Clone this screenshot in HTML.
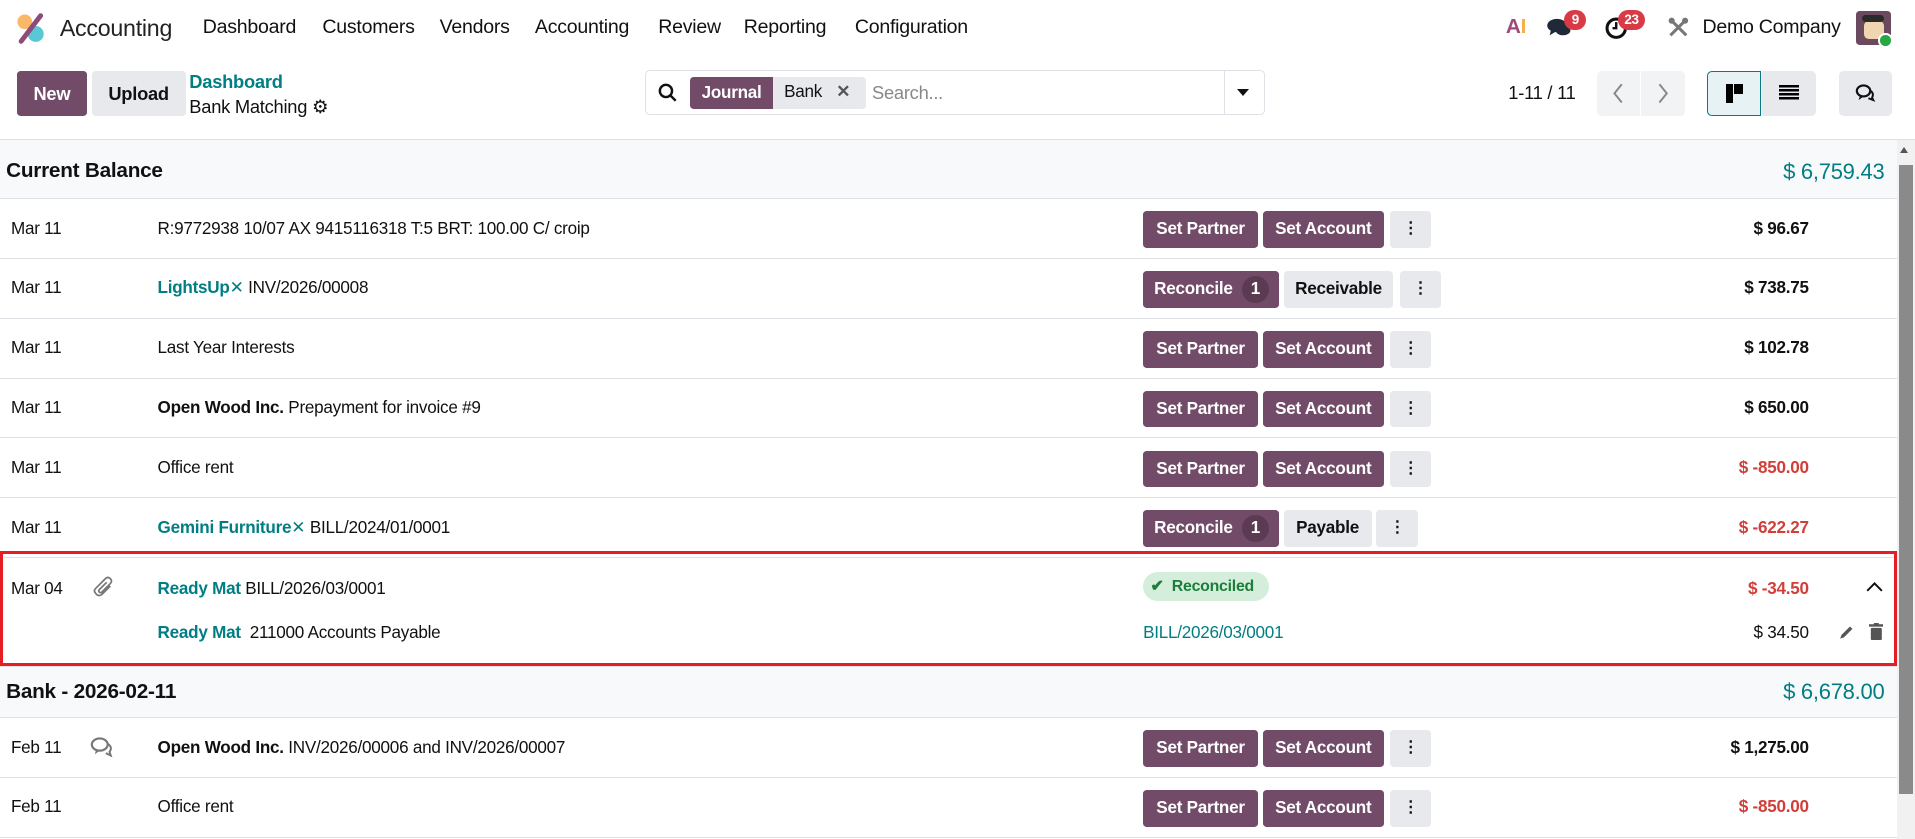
<!DOCTYPE html>
<html><head><meta charset="utf-8"><style>
html{zoom:1.2213}
*{box-sizing:border-box;margin:0;padding:0}
body{width:1568px;height:687px;overflow:hidden;background:#fff;font-family:"Liberation Sans",sans-serif;color:#111;position:relative;font-size:14px;letter-spacing:-0.2px}
.a{position:absolute;white-space:nowrap}
.nav{font-size:16px;top:13px}
.btn{position:absolute;height:30px;border-radius:3px;font-size:14px;font-weight:bold;line-height:30px;text-align:center;color:#fff;background:#714b67}
.g{background:#e7e9ed;color:#111}
.row{position:absolute;left:0;width:1553px;height:49px;border-bottom:1px solid #dee2e6;background:#fff}
.row .d{position:absolute;left:9px;top:16px}
.row .l{position:absolute;left:129px;top:16px}
.row .m{position:absolute;right:72px;top:16px;font-weight:bold}
.teal{color:#017e84}
.red{color:#d23f3a}
.grp{position:absolute;left:0;width:1553px;background:#f8f9fa;border-bottom:1px solid #dee2e6}
.kb{font-size:13px}
</style></head><body>
<svg class="a" style="left:12px;top:10px" width="26" height="26" viewBox="0 0 26 26"><circle cx="8" cy="8" r="6" fill="#f9b869"/><circle cx="17" cy="18" r="6.5" fill="#5ac7d5"/><line x1="5" y1="24" x2="21" y2="3" stroke="#8e4a7a" stroke-width="4" stroke-linecap="round"/></svg>
<div class="a" style="left:49px;top:12px;font-size:19px;color:#222">Accounting</div>
<div class="a nav" style="left:166px">Dashboard</div>
<div class="a nav" style="left:264px">Customers</div>
<div class="a nav" style="left:360px">Vendors</div>
<div class="a nav" style="left:438px">Accounting</div>
<div class="a nav" style="left:539px">Review</div>
<div class="a nav" style="left:609px">Reporting</div>
<div class="a nav" style="left:700px">Configuration</div>
<div class="a" style="left:1233px;top:12px;font-size:17px;font-weight:bold;color:#a04a7a">A<span style="color:#f6b04b">I</span></div>
<svg class="a" style="left:1266px;top:14px" width="22" height="18" viewBox="0 0 22 18"><ellipse cx="9" cy="7" rx="8" ry="5.5" fill="#1f2937"/><path d="M4 11 L3 15 L8 12Z" fill="#1f2937"/><ellipse cx="14" cy="11" rx="6" ry="4" fill="#1f2937"/></svg>
<div class="a" style="left:1281px;top:8px;background:#d93b46;color:#fff;font-size:11px;font-weight:bold;border-radius:9px;padding:2px 6px">9</div>
<svg class="a" style="left:1313px;top:13px" width="20" height="20" viewBox="0 0 20 20"><circle cx="10" cy="10" r="7.5" fill="none" stroke="#111" stroke-width="2.5"/><path d="M10 5v5h-3" fill="none" stroke="#111" stroke-width="2"/></svg>
<div class="a" style="left:1325px;top:8px;background:#d93b46;color:#fff;font-size:11px;font-weight:bold;border-radius:9px;padding:2px 5px">23</div>
<svg class="a" style="left:1366px;top:14px" width="17" height="17" viewBox="0 0 17 17"><path d="M2 15 L15 2 M2 2 L15 15" stroke="#777" stroke-width="2.5"/><circle cx="3" cy="3" r="2.5" fill="#777"/><circle cx="14" cy="3" r="2.5" fill="#777"/></svg>
<div class="a" style="left:1394px;top:13px;font-size:16px">Demo Company</div>
<div class="a" style="left:1520px;top:9px;width:28px;height:28px;background:#6b4a5f;border-radius:3px"><div style="position:absolute;left:6px;top:8px;width:17px;height:15px;background:#f0d5b0;border-radius:4px"></div><div style="position:absolute;left:5px;top:3px;width:18px;height:6px;background:#2a2a2a;border-radius:3px"></div></div>
<div class="a" style="left:1538px;top:27px;width:12px;height:12px;background:#28a745;border-radius:50%;border:2px solid #fff"></div>
<div class="btn" style="left:14px;top:58px;width:57px;height:37px;line-height:37px;font-size:15px">New</div>
<div class="btn g" style="left:75px;top:58px;width:77px;height:37px;line-height:37px;font-size:15px">Upload</div>
<div class="a teal" style="left:155px;top:58px;font-size:15px;font-weight:bold">Dashboard</div>
<div class="a" style="left:155px;top:79px;font-size:15px">Bank Matching <span style="font-size:15px">⚙</span></div>
<div class="a" style="left:528px;top:57px;width:508px;height:37px;border:1px solid #dee2e6;border-radius:4px"></div>
<svg class="a" style="left:539px;top:68px" width="16" height="16" viewBox="0 0 16 16"><circle cx="6.5" cy="6.5" r="5" fill="none" stroke="#111" stroke-width="2"/><line x1="10" y1="10" x2="14.5" y2="14.5" stroke="#111" stroke-width="2"/></svg>
<div class="a" style="left:565px;top:63px;width:144px;height:26px;background:#e7e9ed;border-radius:3px"></div>
<div class="a" style="left:565px;top:63px;width:68px;height:26px;background:#714b67;border-radius:3px 0 0 3px;color:#fff;font-weight:bold;line-height:26px;text-align:center">Journal</div>
<div class="a" style="left:642px;top:67px;font-size:14px">Bank <span style="margin-left:8px;font-weight:bold;color:#555">✕</span></div>
<div class="a" style="left:714px;top:67px;font-size:15px;color:#888">Search...</div>
<div class="a" style="left:1002px;top:58px;width:1px;height:35px;background:#dee2e6"></div>
<div class="a" style="left:1013px;top:73px;width:0;height:0;border-left:5px solid transparent;border-right:5px solid transparent;border-top:6px solid #111"></div>
<div class="a" style="left:1235px;top:67px;font-size:15px">1-11 / 11</div>
<div class="a" style="left:1308px;top:58px;width:72px;height:37px;background:#f2f3f5;border-radius:4px"></div>
<div class="a" style="left:1343px;top:58px;width:1px;height:37px;background:#fff"></div>
<svg class="a" style="left:1320px;top:68px" width="10" height="17" viewBox="0 0 10 17"><path d="M8 1 L2 8.5 L8 16" fill="none" stroke="#888" stroke-width="1.6"/></svg>
<svg class="a" style="left:1357px;top:68px" width="10" height="17" viewBox="0 0 10 17"><path d="M2 1 L8 8.5 L2 16" fill="none" stroke="#888" stroke-width="1.6"/></svg>
<div class="a" style="left:1398px;top:58px;width:44px;height:37px;background:#e6f2f3;border:1px solid #017e84;border-radius:4px 0 0 4px"></div>
<div class="a" style="left:1413px;top:69px;width:6px;height:15px;background:#000"></div><div class="a" style="left:1420px;top:69px;width:7px;height:8px;background:#000"></div>
<div class="a" style="left:1443px;top:58px;width:44px;height:37px;background:#e7e9ed;border-radius:0 4px 4px 0"></div>
<div class="a" style="left:1457px;top:70px;width:16px;height:12px;background:repeating-linear-gradient(#000 0 2px,transparent 2px 3.3px)"></div>
<div class="a" style="left:1506px;top:58px;width:43px;height:37px;background:#e7e9ed;border-radius:4px"></div>
<svg class="a" style="left:1519px;top:68px" width="17" height="16" viewBox="0 0 17 16"><ellipse cx="7" cy="6.5" rx="5.5" ry="4.5" fill="none" stroke="#111" stroke-width="1.8"/><path d="M4 10.5 L3 14 L7 11" fill="#111"/><path d="M12 6 Q16 8 14 12 L15 14 L11 12.5" fill="none" stroke="#111" stroke-width="1.6"/></svg>
<div class="a" style="left:0;top:114px;width:1568px;height:1px;background:#dee2e6"></div>
<div class="a" style="left:1553px;top:115px;width:15px;height:572px;background:#f1f1f1"></div>
<div class="a" style="left:1555px;top:135px;width:11px;height:515px;background:#8a8a8a"></div>
<div class="a" style="left:1556px;top:120px;width:0;height:0;border-left:4px solid transparent;border-right:4px solid transparent;border-bottom:5px solid #555"></div>
<div class="grp" style="top:115px;height:48px"><div class="a" style="left:5px;top:15px;font-size:17px;font-weight:bold">Current Balance</div><div class="a teal" style="right:10px;top:15px;font-size:18px">$ 6,759.43</div></div>
<div class="row" style="top:163px"><div class="d">Mar 11</div><div class="l">R:9772938 10/07 AX 9415116318 T:5 BRT: 100.00 C/ croip</div><div class="btn" style="left:936px;top:10px;width:94px">Set Partner</div><div class="btn" style="left:1034px;top:10px;width:99px">Set Account</div><div class="btn g kb" style="left:1138px;top:10px;width:34px">⋮</div><div class="m">$ 96.67</div></div>
<div class="row" style="top:212px"><div class="d">Mar 11</div><div class="l"><b class="teal">LightsUp</b><span class="teal">✕</span> INV/2026/00008</div><div class="btn" style="left:936px;top:10px;width:111px;text-align:left;padding-left:9px">Reconcile <span style="display:inline-block;width:22px;height:22px;line-height:22px;border-radius:50%;background:#5b3b52;text-align:center;margin-left:4px">1</span></div><div class="btn g" style="left:1051px;top:10px;width:90px">Receivable</div><div class="btn g kb" style="left:1146px;top:10px;width:34px">⋮</div><div class="m">$ 738.75</div></div>
<div class="row" style="top:261px"><div class="d">Mar 11</div><div class="l">Last Year Interests</div><div class="btn" style="left:936px;top:10px;width:94px">Set Partner</div><div class="btn" style="left:1034px;top:10px;width:99px">Set Account</div><div class="btn g kb" style="left:1138px;top:10px;width:34px">⋮</div><div class="m">$ 102.78</div></div>
<div class="row" style="top:310px"><div class="d">Mar 11</div><div class="l"><b>Open Wood Inc.</b> Prepayment for invoice #9</div><div class="btn" style="left:936px;top:10px;width:94px">Set Partner</div><div class="btn" style="left:1034px;top:10px;width:99px">Set Account</div><div class="btn g kb" style="left:1138px;top:10px;width:34px">⋮</div><div class="m">$ 650.00</div></div>
<div class="row" style="top:359px"><div class="d">Mar 11</div><div class="l">Office rent</div><div class="btn" style="left:936px;top:10px;width:94px">Set Partner</div><div class="btn" style="left:1034px;top:10px;width:99px">Set Account</div><div class="btn g kb" style="left:1138px;top:10px;width:34px">⋮</div><div class="m red">$ -850.00</div></div>
<div class="row" style="top:408px"><div class="d">Mar 11</div><div class="l"><b class="teal">Gemini Furniture</b><span class="teal">✕</span> BILL/2024/01/0001</div><div class="btn" style="left:936px;top:10px;width:111px;text-align:left;padding-left:9px">Reconcile <span style="display:inline-block;width:22px;height:22px;line-height:22px;border-radius:50%;background:#5b3b52;text-align:center;margin-left:4px">1</span></div><div class="btn g" style="left:1051px;top:10px;width:72px">Payable</div><div class="btn g kb" style="left:1127px;top:10px;width:34px">⋮</div><div class="m red">$ -622.27</div></div>
<div class="a" style="left:0;top:451px;width:1553px;height:94px;border:3px solid #e51e25;background:#fff"></div>
<div class="a" style="left:3px;top:456px;width:1547px;height:1px;background:#dee2e6"></div>
<div class="a" style="left:9px;top:474px">Mar 04</div>
<svg class="a" style="left:75px;top:471px" width="18" height="18" viewBox="0 0 18 18"><path d="M15 9 L8 16 Q5 18 3 15 Q1 13 3 11 L11 3 Q13 1 15 3 Q17 5 15 7 L8 14 Q7 15 6 14 Q5 13 6 12 L12 6" fill="none" stroke="#777" stroke-width="1.4"/></svg>
<div class="a" style="left:129px;top:474px"><b class="teal">Ready Mat</b> BILL/2026/03/0001</div>
<div class="a" style="left:936px;top:468px;width:103px;height:24px;border-radius:12px;background:#d5eedb;color:#1b7d3a;font-size:13px;font-weight:bold;line-height:24px;padding-left:6px">✔ &nbsp;Reconciled</div>
<div class="a red" style="right:87px;top:474px;font-weight:bold">$ -34.50</div>
<svg class="a" style="left:1528px;top:476px" width="14" height="9" viewBox="0 0 14 9"><path d="M1 8 L7 2 L13 8" fill="none" stroke="#111" stroke-width="1.6"/></svg>
<div class="a" style="left:129px;top:510px"><b class="teal">Ready Mat</b>&nbsp; 211000 Accounts Payable</div>
<div class="a teal" style="left:936px;top:510px">BILL/2026/03/0001</div>
<div class="a" style="right:87px;top:510px">$ 34.50</div>
<svg class="a" style="left:1506px;top:511px" width="13" height="13" viewBox="0 0 13 13"><path d="M1 12 L2 9 L9 2 L11 4 L4 11Z" fill="#555"/></svg>
<svg class="a" style="left:1530px;top:510px" width="12" height="14" viewBox="0 0 12 14"><rect x="0" y="1" width="12" height="2" fill="#555"/><rect x="4" y="0" width="4" height="2" fill="#555"/><rect x="1.5" y="4" width="9" height="10" rx="1" fill="#555"/></svg>
<div class="grp" style="top:545px;height:43px;border-top:1px solid #dee2e6"><div class="a" style="left:5px;top:11px;font-size:17px;font-weight:bold">Bank - 2026-02-11</div><div class="a teal" style="right:10px;top:10px;font-size:18px">$ 6,678.00</div></div>
<div class="row" style="top:588px"><div class="d">Feb 11</div><svg class="a" style="left:74px;top:15px" width="20" height="18" viewBox="0 0 20 18"><ellipse cx="8" cy="7" rx="6.5" ry="5" fill="none" stroke="#777" stroke-width="1.8"/><path d="M5 11 L4 15 L8 12" fill="#777"/><path d="M14 6 Q19 9 16 13 L17 16 L13 14" fill="none" stroke="#777" stroke-width="1.6"/></svg><div class="l"><b>Open Wood Inc.</b> INV/2026/00006 and INV/2026/00007</div><div class="btn" style="left:936px;top:10px;width:94px">Set Partner</div><div class="btn" style="left:1034px;top:10px;width:99px">Set Account</div><div class="btn g kb" style="left:1138px;top:10px;width:34px">⋮</div><div class="m">$ 1,275.00</div></div>
<div class="row" style="top:637px"><div class="d">Feb 11</div><div class="l">Office rent</div><div class="btn" style="left:936px;top:10px;width:94px">Set Partner</div><div class="btn" style="left:1034px;top:10px;width:99px">Set Account</div><div class="btn g kb" style="left:1138px;top:10px;width:34px">⋮</div><div class="m red">$ -850.00</div></div>
</body></html>
